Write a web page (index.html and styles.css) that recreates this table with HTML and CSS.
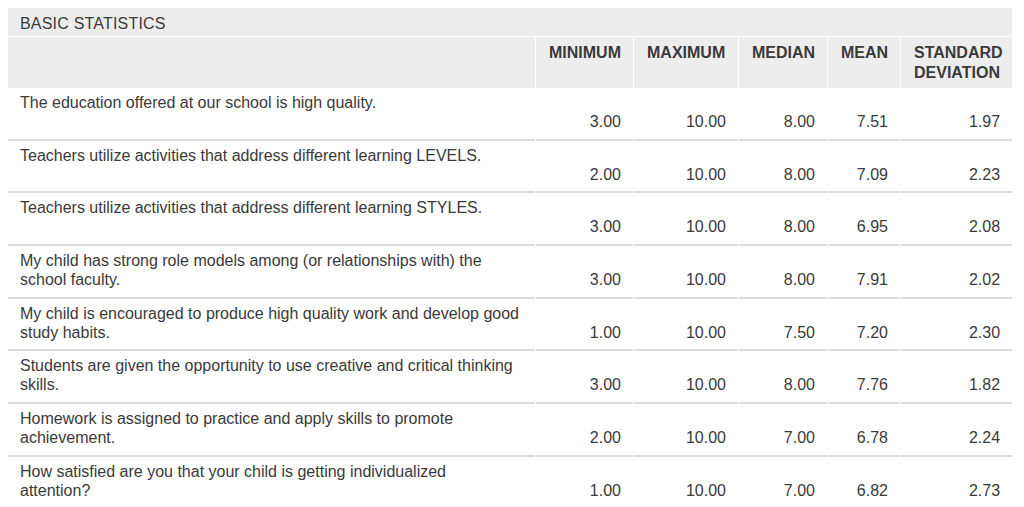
FILE: index.html
```html
<!DOCTYPE html>
<html>
<head>
<meta charset="utf-8">
<link rel="stylesheet" href="styles.css">
</head>
<body>
<table class="stats">
  <colgroup>
    <col class="c-q">
    <col class="c-min">
    <col class="c-max">
    <col class="c-med">
    <col class="c-mean">
    <col class="c-sd">
  </colgroup>
  <thead>
    <tr><th class="title" colspan="6">BASIC STATISTICS</th></tr>
    <tr class="heads">
      <th></th>
      <th>MINIMUM</th>
      <th>MAXIMUM</th>
      <th>MEDIAN</th>
      <th>MEAN</th>
      <th>STANDARD DEVIATION</th>
    </tr>
  </thead>
  <tbody>
    <tr><td class="q">The education offered at our school is high quality.</td><td>3.00</td><td>10.00</td><td>8.00</td><td>7.51</td><td>1.97</td></tr>
    <tr><td class="q">Teachers utilize activities that address different learning LEVELS.</td><td>2.00</td><td>10.00</td><td>8.00</td><td>7.09</td><td>2.23</td></tr>
    <tr><td class="q">Teachers utilize activities that address different learning STYLES.</td><td>3.00</td><td>10.00</td><td>8.00</td><td>6.95</td><td>2.08</td></tr>
    <tr><td class="q">My child has strong role models among (or relationships with) the school faculty.</td><td>3.00</td><td>10.00</td><td>8.00</td><td>7.91</td><td>2.02</td></tr>
    <tr><td class="q">My child is encouraged to produce high quality work and develop good study habits.</td><td>1.00</td><td>10.00</td><td>7.50</td><td>7.20</td><td>2.30</td></tr>
    <tr><td class="q">Students are given the opportunity to use creative and critical thinking skills.</td><td>3.00</td><td>10.00</td><td>8.00</td><td>7.76</td><td>1.82</td></tr>
    <tr><td class="q">Homework is assigned to practice and apply skills to promote achievement.</td><td>2.00</td><td>10.00</td><td>7.00</td><td>6.78</td><td>2.24</td></tr>
    <tr><td class="q">How satisfied are you that your child is getting individualized attention?</td><td>1.00</td><td>10.00</td><td>7.00</td><td>6.82</td><td>2.73</td></tr>
  </tbody>
</table>
</body>
</html>
```
FILE: styles.css
```css
html, body {
  margin: 0;
  padding: 0;
  background: #fff;
}
body {
  padding: 7px 0 0 7px;
  font-family: "Liberation Sans", Arial, sans-serif;
  font-size: 16px;
  color: #3a3a3a;
}
.stats {
  table-layout: fixed;
  width: 1005px;
  border-collapse: separate;
  border-spacing: 1px;
}
.c-q { width: 527px; }
.c-min { width: 97px; }
.c-max { width: 104px; }
.c-med { width: 88px; }
.c-mean { width: 72px; }
.c-sd { width: 111px; }

.stats th {
  background: #ededed;
  font-weight: bold;
  text-align: left;
  vertical-align: top;
  line-height: 19.2px;
  padding: 6px 12px 6px 13px;
  height: 38.4px;
}
.stats th.title {
  font-weight: normal;
  height: auto;
  padding: 7px 12px 3px 12px;
  line-height: 18.4px;
  letter-spacing: 0.2px;
}
.stats td {
  line-height: 19.2px;
  padding: 4px 12px 7.3px 12px;
  border-bottom: 2px solid #dcdcdc;
  text-align: right;
  vertical-align: bottom;
  height: 38.4px;
}
.stats td.q {
  text-align: left;
  vertical-align: top;
  padding-right: 16px;
}
```
